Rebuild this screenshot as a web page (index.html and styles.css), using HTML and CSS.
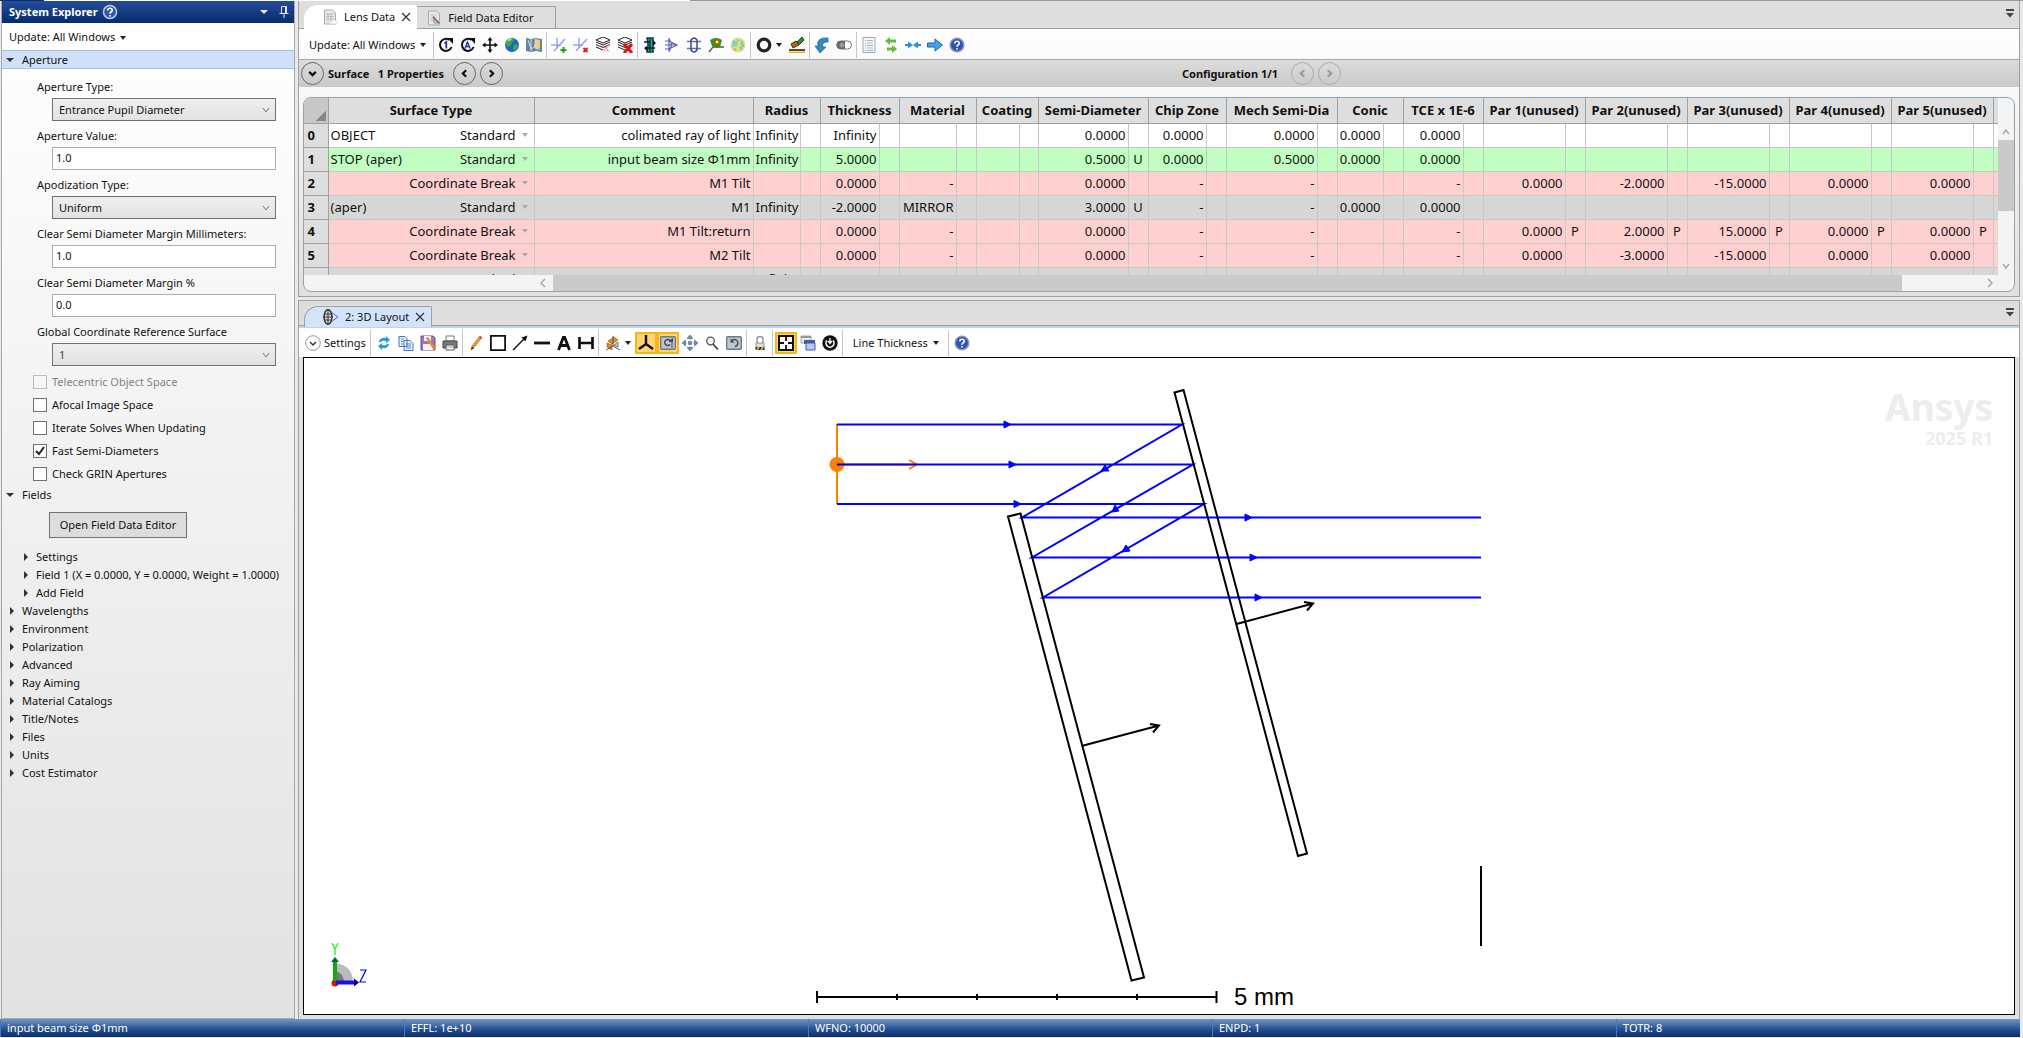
FILE: index.html
```html
<!DOCTYPE html>
<html lang="en">
<head>
  <meta charset="UTF-8" />
  <title>Lens Data</title>
  <link rel="stylesheet" href="styles.css">
</head>
<body>
  <div class="ribbon-edge"></div>
  <div class="workspace">
    <aside class="explorer">
      <header class="explorer-title">
        <h1>System Explorer</h1>
        <svg class="icon" viewBox="0 0 16 16"><circle cx="8" cy="8" r="6.5" fill="#3157b5" stroke="#c3cbdc" stroke-width="1.5"/><path d="M5.8 6.4q0-2.200 2.200-2.200t2.200 2q0 1.100-1.200 1.800-1 .6-1 1.700M8 11v1.500" fill="none" stroke="#fff" stroke-width="1.600"/></svg>
        <span class="spacer"></span>
        <svg class="icon" viewBox="0 0 16 16"><path d="M4 6h8l-4 4z" fill="#dfe5f2"/></svg>
        <svg class="icon" viewBox="0 0 16 16"><path d="M5.500 9.500v-7h5v7M9.500 3v6M3.500 9.500h9M8 10v4" fill="none" stroke="#dfe5f2"/></svg>
      </header>
      <button class="update-all">Update: All Windows <i class="caret"></i></button>
      <details class="group active" open>
        <summary>Aperture</summary>
        <div class="form">
          <label for="ap-type">Aperture Type:</label>
          <select id="ap-type"><option>Entrance Pupil Diameter</option></select>
          <label for="ap-value">Aperture Value:</label>
          <input type="text" id="ap-value" value="1.0">
          <label for="apod">Apodization Type:</label>
          <select id="apod"><option>Uniform</option></select>
          <label for="margin-mm">Clear Semi Diameter Margin Millimeters:</label>
          <input type="text" id="margin-mm" value="1.0">
          <label for="margin-pc">Clear Semi Diameter Margin %</label>
          <input type="text" id="margin-pc" value="0.0">
          <label for="ref-surface">Global Coordinate Reference Surface</label>
          <select id="ref-surface" class="dim"><option>1</option></select>
        </div>
        <div class="checks">
          <label class="off"><input type="checkbox" disabled> Telecentric Object Space</label>
          <label><input type="checkbox"> Afocal Image Space</label>
          <label><input type="checkbox"> Iterate Solves When Updating</label>
          <label><input type="checkbox" checked> Fast Semi-Diameters</label>
          <label><input type="checkbox"> Check GRIN Apertures</label>
        </div>
      </details>
      <details class="group" open>
        <summary>Fields</summary>
        <button class="open-editor">Open Field Data Editor</button>
        <details class="nested"><summary>Settings</summary></details>
        <details class="nested"><summary>Field 1 (X = 0.0000, Y = 0.0000, Weight = 1.0000)</summary></details>
        <details class="nested"><summary>Add Field</summary></details>
      </details>
      <details class="group"><summary>Wavelengths</summary></details>
      <details class="group"><summary>Environment</summary></details>
      <details class="group"><summary>Polarization</summary></details>
      <details class="group"><summary>Advanced</summary></details>
      <details class="group"><summary>Ray Aiming</summary></details>
      <details class="group"><summary>Material Catalogs</summary></details>
      <details class="group"><summary>Title/Notes</summary></details>
      <details class="group"><summary>Files</summary></details>
      <details class="group"><summary>Units</summary></details>
      <details class="group"><summary>Cost Estimator</summary></details>
    </aside>

    <main class="panels">
      <section class="panel editor">
        <div class="tabs">
          <button class="tab current">
            <svg class="icon" viewBox="0 0 16 16"><path d="M2.500 1h8l3 3v11h-11z" fill="#e9eaea" stroke="#aaa"/><path d="M4 5h8M4 7.500h8M4 10h8M6 4v9M9 4v9" stroke="#bbb" fill="none"/><path d="M8 15q-1-3 2-3 1-2 3-1 3 1 2 4z" fill="#f5f7f9" stroke="#ccc" stroke-width=".5"/></svg>
            Lens Data
            <svg class="close" viewBox="0 0 10 10"><path d="M1 1l8 8M9 1l-8 8"/></svg>
          </button>
          <button class="tab">
            <svg class="icon" viewBox="0 0 16 16"><path d="M2.500 1h8l3 3v11h-11z" fill="#e9eaea" stroke="#aaa"/><path d="M4 5h7M4 7.500h7M4 10h7M6 4v8" stroke="#ccc" fill="none"/><path d="M7 7l6 6" stroke="#d22" stroke-width="1.500"/><path d="M8 6v7h6" stroke="#4a9" fill="none"/></svg>
            Field Data Editor
          </button>
          <span class="spacer"></span>
          <button class="tab-menu" aria-label="Tab list"><svg viewBox="0 0 10 10"><path d="M1 0h8v2H1zM1 4h8L5 8.500z" fill="#444"/></svg></button>
        </div>
        <div class="toolbar">
          <button class="text">Update: All Windows <i class="caret"></i></button>
          <i class="sep"></i>
          <button><svg viewBox="0 0 16 16"><path d="M11.500 3A6 6 0 1 0 13.600 10" fill="none" stroke="#111" stroke-width="2"/><path d="M9.500 1H15v6z" fill="#111"/><path d="M6.500 6.500L8.300 5v6.500" fill="none" stroke="#2a35b0" stroke-width="1.800"/></svg></button>
          <button><svg viewBox="0 0 16 16"><path d="M11.500 3A6 6 0 1 0 13.600 10" fill="none" stroke="#111" stroke-width="2"/><path d="M9.500 1H15v6z" fill="#111"/><path d="M5 11.500L7.500 5 10 11.500M6 9.500h3" fill="none" stroke="#2a35b0" stroke-width="1.500"/></svg></button>
          <button><svg viewBox="0 0 16 16"><path d="M8 2v12M2 8h12" stroke="#111" stroke-width="1.600"/><path d="M8 0l2.500 3.500h-5zM8 16l2.500-3.500h-5zM0 8l3.500-2.500v5zM16 8l-3.500-2.500v5z" fill="#111"/></svg></button>
          <button><svg viewBox="0 0 16 16"><circle cx="8" cy="8" r="7" fill="#2165c4"/><path d="M2 4q4-4 8-3 0 3-2 4l-1 3q-2 3-4 1-2-2-1-5zM10 8q4-2 4 2l-3 4q-3-2-1-6z" fill="#3fae3d"/><path d="M3 4q2-3 5-2-1 2-5 2z" fill="#b9eaff"/></svg></button>
          <button><svg viewBox="0 0 16 16"><path d="M0 1l5 1 5-1 6 1v13l-6-1-5 1-5-1z" fill="#5f87a5"/><path d="M9 2l5 1v8l-4 2-2-4z" fill="#f0cb75"/><path d="M2 3l3 9 5-3 4 4M5 2v12M10 2v6" stroke="#d9e1e3" fill="none"/></svg></button>
          <i class="sep"></i>
          <button><svg viewBox="0 0 16 16"><path d="M0 8h10M6 1v10M3 14L14 2" stroke="#9aa5ea" stroke-width="1.500"/><path d="M12.500 10v6M9.500 13h6" stroke="#19a51c" stroke-width="2"/></svg></button>
          <button><svg viewBox="0 0 16 16"><path d="M0 8h10M6 1v10M3 14L14 2" stroke="#9aa5ea" stroke-width="1.500"/><path d="M10.500 11l4 4M14.500 11l-4 4" stroke="#d32020" stroke-width="2"/></svg></button>
          <button><svg viewBox="0 0 16 16"><path d="M8 0l7 3-7 3-7-3zM1 5l7 3 7-3M1 7.500l7 3 7-3M1 10l7 3" fill="#fff" stroke="#222"/><path d="M8 8l6 7M14 8l-6 7" stroke="#e88" stroke-width="1.500" stroke-dasharray="2 1"/></svg></button>
          <button><svg viewBox="0 0 16 16"><path d="M8 0l7 3-7 3-7-3zM1 5l7 3 7-3M1 7.500l7 3 7-3M1 10l7 3" fill="#fff" stroke="#222"/><path d="M7 7l8 9M15 7l-8 9" stroke="#e01010" stroke-width="3"/></svg></button>
          <i class="sep"></i>
          <button><svg viewBox="0 0 16 16"><path d="M5 1h6v14H5q2-7 0-14z" fill="#1cb5b0" stroke="#0b3b40" stroke-width="1.500"/><path d="M2 5h6M4 11h9M8 2v12" stroke="#102020" stroke-width="1.300"/><path d="M11 3l3 3-3 3zM5 9l-3 2 3 3z" fill="#111"/></svg></button>
          <button><svg viewBox="0 0 16 16"><path d="M5 1v14M1 4h4l8 4-8 4H1M1 8h12M5 2q5 6 0 12" stroke="#5864b8" stroke-width="1.200" fill="none"/></svg></button>
          <button><svg viewBox="0 0 16 16"><path d="M1 4.500h14M1 11.500h14" stroke="#6570c0" stroke-width="1.400"/><path d="M5 3q3-4 6 0v10q-3 4-6 0z" fill="none" stroke="#404a80" stroke-width="1.500"/></svg></button>
          <button><svg viewBox="0 0 16 16"><path d="M1 15l4-5h11" stroke="#555" fill="none" stroke-width="1.300"/><path d="M2 3q6-4 12 0l-2 7q-4 2-8-1z" fill="#32902d"/><path d="M6 4l4-1 2 3-3 3z" fill="#d93c17"/><circle cx="9" cy="5" r="1.500" fill="#ff0"/></svg></button>
          <button><svg viewBox="0 0 16 16"><circle cx="8" cy="8" r="7.500" fill="#dbe574"/><path d="M3 3l5 2-1 4-5 1zM10 2l4 4-3 2zM9 10l5-1-3 5z" fill="#75cfdf"/><path d="M6 2l3 1-1 2zM3 11l4 1-2 2zM10 8l4-1v3z" fill="#f28e96"/></svg></button>
          <i class="sep"></i>
          <button class="drop"><svg viewBox="0 0 16 16"><circle cx="8" cy="8" r="5.800" fill="none" stroke="#222" stroke-width="3.200"/></svg><i class="caret"></i></button>
          <button><svg viewBox="0 0 16 16"><path d="M4 11L2 7l5-3 3 4z" fill="#b4651b" stroke="#432"/><path d="M8 5l5-5 2 3-5 5z" fill="#328b35" stroke="#243"/><path d="M0 13h16" stroke="#111" stroke-width="1.500"/><path d="M0 15.300h16" stroke="#f0b400" stroke-width="1.500"/></svg></button>
          <i class="sep"></i>
          <button><svg viewBox="0 0 16 16"><path d="M14 1Q2 0 4 9H1l5 7 6-6H9Q7 5 14 5z" fill="#2f88c9" stroke="#1b5f9a" stroke-width=".7"/></svg></button>
          <button><svg viewBox="0 0 16 16"><rect x=".5" y="4" width="15" height="8" rx="4" fill="#fff" stroke="#777"/><path d="M5 4h4v8H5a4 4 0 0 1 0-8z" fill="#666"/><circle cx="6" cy="8" r="2.500" fill="#999"/></svg></button>
          <i class="sep"></i>
          <button><svg viewBox="0 0 16 16"><path d="M2 .5h12v15H2z" fill="#f5f8fb" stroke="#9ba9b8"/><path d="M4 3.500h1M4 6h1M4 8.500h1M4 11h1M4 13.500h1M6 3.500h6M6 6h6M6 8.500h6M6 11h6M6 13.500h6" stroke="#a3b6c9"/></svg></button>
          <button><svg viewBox="0 0 16 16"><path d="M2 4l5-4v2.500h6v3H7V8zM14 12l-5 4v-2.500H4v-3h5V8z" fill="#62bd3c"/></svg></button>
          <button><svg viewBox="0 0 16 16"><path d="M0 7h3V4.500L8 8l-5 3.500V9H0zM16 7h-3V4.500L8 8l5 3.500V9h3z" fill="#2590dd"/></svg></button>
          <button><svg viewBox="0 0 16 16"><path d="M.5 6H8V2l7.500 6L8 14v-4H.5z" fill="#42a2ea" stroke="#1b62a7"/></svg></button>
          <button><svg viewBox="0 0 16 16"><circle cx="8" cy="8" r="6.800" fill="#2b55b8" stroke="#8a97b5" stroke-width="1.500"/><path d="M5.800 6.400q0-2.200 2.200-2.200t2.200 2q0 1.100-1.200 1.800-1 .6-1 1.700M8 11v1.500" fill="none" stroke="#fff" stroke-width="1.600"/></svg></button>
        </div>
        <div class="props">
          <button class="round" aria-label="Expand"><svg viewBox="0 0 10 10"><path d="M2 3.500l3 3 3-3"/></svg></button>
          <b class="props-title">Surface &nbsp; 1 Properties</b>
          <button class="round" aria-label="Previous surface"><svg viewBox="0 0 10 10"><path d="M6.500 2l-3 3 3 3"/></svg></button>
          <button class="round" aria-label="Next surface"><svg viewBox="0 0 10 10"><path d="M3.500 2l3 3-3 3"/></svg></button>
          <b class="config">Configuration 1/1</b>
          <button class="round off" disabled aria-label="Previous configuration"><svg viewBox="0 0 10 10"><path d="M6.500 2l-3 3 3 3"/></svg></button>
          <button class="round off" disabled aria-label="Next configuration"><svg viewBox="0 0 10 10"><path d="M3.500 2l3 3-3 3"/></svg></button>
        </div>
        <div class="grid-area">
          <div class="grid-frame">
            <div class="grid-view">
              <table class="lens-grid">
                <colgroup id="cols"></colgroup>
                <thead><tr id="head"></tr></thead>
                <tbody id="rows"></tbody>
              </table>
            </div>
            <div class="vscroll">
              <svg viewBox="0 0 10 10"><path d="M2 7l3-4 3 4"/></svg>
              <i class="thumb"></i>
              <svg viewBox="0 0 10 10"><path d="M2 3l3 4 3-4"/></svg>
            </div>
            <div class="hscroll">
              <svg viewBox="0 0 10 10"><path d="M7 1L3 5l4 4"/></svg>
              <i class="thumb"></i>
              <svg viewBox="0 0 10 10"><path d="M3 1l4 4-4 4"/></svg>
            </div>
          </div>
        </div>
      </section>

      <section class="panel layout">
        <div class="tabs blue">
          <button class="tab current">
            <svg class="icon" viewBox="0 0 16 16"><ellipse cx="5" cy="8" rx="4" ry="7.300" fill="#ddd" stroke="#222" stroke-width="1.300"/><path d="M5 1v14M1 5h8M1 11h8M0 8h10" stroke="#333"/><path d="M8 3l7 5-7 5" fill="none" stroke="#5560c8"/></svg>
            2: 3D Layout
            <svg class="close" viewBox="0 0 10 10"><path d="M1 1l8 8M9 1l-8 8"/></svg>
          </button>
          <span class="spacer"></span>
          <button class="tab-menu" aria-label="Tab list"><svg viewBox="0 0 10 10"><path d="M1 0h8v2H1zM1 4h8L5 8.500z" fill="#444"/></svg></button>
        </div>
        <div class="toolbar">
          <button class="text"><svg viewBox="0 0 16 16"><circle cx="8" cy="8" r="7.300" fill="#fff" stroke="#999"/><path d="M5 7l3 3 3-3" fill="none" stroke="#333" stroke-width="1.500"/></svg> Settings</button>
          <i class="sep"></i>
          <button><svg viewBox="0 0 16 16"><path d="M3 7q1-5 7-4V1l4 4-4 3V6Q6 5 5 7zM13 9q-1 5-7 4v2l-4-4 4-3v2q4 1 5-1z" fill="#2a9bd8"/></svg></button>
          <button><svg viewBox="0 0 16 16"><path d="M1 1.500h6l2 2v8H1zM6 5.500h6l3 3v7H6z" fill="#eaf2ff" stroke="#4576b8"/><path d="M3 4h3M3 6.500h2M3 9h2M8 9h5M8 11h5M8 13h5" stroke="#5587c8"/></svg></button>
          <button><svg viewBox="0 0 16 16"><path d="M1 1h12l2 2v12H1z" fill="#9b79b8" stroke="#69488b"/><path d="M4 1h7v5H4zM3 9h10v6H3z" fill="#f5f2f8"/><path d="M6 3l7 11 2 1v-3L8 2z" fill="#e98922"/></svg></button>
          <button><svg viewBox="0 0 16 16"><path d="M4 1h8v5H4z" fill="#fff" stroke="#777"/><path d="M1 6h14v7H1z" fill="#77797c" stroke="#444"/><path d="M4 10h8v5H4z" fill="#fff" stroke="#555"/><path d="M5 12h6" stroke="#999"/></svg></button>
          <i class="sep"></i>
          <button><svg viewBox="0 0 16 16"><path d="M3 15l1-4 8-10 2 1.500-8 10z" fill="#f29a2e" stroke="#b66312" stroke-width=".7"/><path d="M3 15l1-3 2 1z" fill="#222"/><path d="M12 1l2 1.500-1 1.500-2-1.500z" fill="#d9534f"/></svg></button>
          <button><svg viewBox="0 0 16 16"><path d="M.9.9h14.200v14.200H.9z" fill="none" stroke="#111" stroke-width="1.800"/></svg></button>
          <button><svg viewBox="0 0 16 16"><path d="M1 15L12 4" stroke="#111" stroke-width="1.500"/><path d="M15.500.5l-2 6-4-4z" fill="#111"/></svg></button>
          <button><svg viewBox="0 0 16 16"><path d="M0 8h16" stroke="#111" stroke-width="2.800"/></svg></button>
          <button><svg viewBox="0 0 16 16"><path d="M2.500 15L7.300 2.500h1.400L13.500 15M4.500 10.500h7" fill="none" stroke="#111" stroke-width="2.800"/></svg></button>
          <button><svg viewBox="0 0 16 16"><path d="M1.500 2v12M14.500 2v12M1.500 8h13" stroke="#111" stroke-width="2.700"/></svg></button>
          <i class="sep"></i>
          <button class="drop"><svg viewBox="0 0 16 16"><path d="M3 6l6-4 4 3-6 4zM2 8l5 2v5l-5-3z" fill="#e8862a" stroke="#945317" stroke-width=".6"/><path d="M8 1v10L1 15M8 11l7 4" fill="none" stroke="#555"/><path d="M9 10l4-3v5z" fill="#ccc" stroke="#777"/></svg><i class="caret"></i></button>
          <button class="on"><svg viewBox="0 0 16 16"><path d="M8 0v9M8 9l-7 5M8 9l7 5" stroke="#111" stroke-width="2.400"/></svg></button>
          <button class="on"><svg viewBox="0 0 16 16"><rect x=".7" y="1.700" width="14.600" height="12.600" rx="1" fill="#bcc6cd" stroke="#6f7b84" stroke-width="1.400"/><path d="M10 9.500a3 3 0 1 1 0-4" fill="none" stroke="#445" stroke-width="1.400"/><path d="M9 6.500h3.500v-3zM12 7v6" stroke="#445" fill="#445"/></svg></button>
          <button><svg viewBox="0 0 16 16"><path d="M8 0l3 3.500H5zM8 16l3-3.500H5zM0 8l3.500-3v6zM16 8l-3.500-3v6zM6.500 6.500h3v3h-3zM8 3v2M8 11v2M3 8h2M11 8h2" fill="#6d91b5" stroke="#48688a" stroke-width=".6"/></svg></button>
          <button><svg viewBox="0 0 16 16"><circle cx="6.500" cy="6" r="3.800" fill="#f5f5f5" stroke="#555" stroke-width="1.300"/><path d="M9 9l5 5.500" stroke="#444" stroke-width="1.800"/></svg></button>
          <button><svg viewBox="0 0 16 16"><rect x=".7" y="1.700" width="14.600" height="12.600" rx="1" fill="#bcc6cd" stroke="#6f7b84" stroke-width="1.400"/><path d="M6 5.500a3.500 3.500 0 1 1 3 6" fill="none" stroke="#445" stroke-width="1.400"/><path d="M4.500 3.500v4h4z" fill="#445"/></svg></button>
          <i class="sep"></i>
          <button><svg viewBox="0 0 16 16"><path d="M5 8V4q0-2.500 3-2.500T11 4v4" fill="none" stroke="#999" stroke-width="1.500"/><path d="M4 8h8v5H4z" fill="#ddd" stroke="#999"/><path d="M3.500 12h9v3h-9z" fill="#333"/><path d="M5 15l2-3M9 15l2-3" stroke="#edc224" stroke-width="1.500"/></svg></button>
          <i class="sep"></i>
          <button class="on"><svg viewBox="0 0 16 16"><path d="M1 1h14v14H1z" fill="#fff" stroke="#111" stroke-width="2"/><path d="M8 1v5M8 15v-5M1 8h5M15 8h-5" stroke="#111" stroke-width="1.800"/></svg></button>
          <button><svg viewBox="0 0 16 16"><path d="M1 1h10v7H1z" fill="#e7e9ec" stroke="#aaa"/><path d="M1 1h10v2H1z" fill="#999"/><path d="M4 5h11v4H4z" fill="#3c5ea9"/><path d="M6 8h9v7H6z" fill="#b9c8e8" stroke="#3c5ea9"/></svg></button>
          <button><svg viewBox="0 0 16 16"><circle cx="8" cy="8" r="7.700" fill="#111"/><path d="M5 5.500a4 4 0 1 0 6 0" fill="none" stroke="#fff" stroke-width="1.600"/><path d="M8 3v5M6 6l2 2.500L10 6" fill="none" stroke="#fff" stroke-width="1.300"/></svg></button>
          <i class="sep"></i>
          <button class="text wide">Line Thickness <i class="caret"></i></button>
          <i class="sep"></i>
          <button><svg viewBox="0 0 16 16"><circle cx="8" cy="8" r="6.800" fill="#2b55b8" stroke="#8a97b5" stroke-width="1.500"/><path d="M5.800 6.400q0-2.200 2.200-2.200t2.200 2q0 1.100-1.200 1.800-1 .6-1 1.700M8 11v1.500" fill="none" stroke="#fff" stroke-width="1.600"/></svg></button>
        </div>
        <div class="canvas">
          <!-- ray trace, canvas pixels -->
          <svg class="drawing" viewBox="304 358 1710 656">
            <g class="watermark">
              <text x="1993" y="421" font-size="37" text-anchor="end">Ansys</text>
              <text x="1993" y="445" font-size="18" text-anchor="end">2025 R1</text>
            </g>
            <g class="source">
              <path d="M837 424v80M909 460l8 4.500-8 4.500M837 464.500h80"/>
              <circle cx="837" cy="464.500" r="7.500"/>
            </g>
            <g class="rays">
              <path d="M837 424.500H1182L1022 517.500H1481M837 464.500H1193L1032 557.500H1481M837 504H1204L1043 597.500H1481"/>
              <path class="tip" d="M1004 421l7 3.500-7 3.500zM1009 461l7 3.500-7 3.500zM1014 500.500l7 3.500-7 3.500zM1245 514l7 3.500-7 3.500zM1250 554l7 3.500-7 3.500zM1255 594l7 3.500-7 3.500z"/>
              <path class="tip" d="M1101 471l4-6 4 6zM1112 512l3-7 4 6zM1122 552l4-7 4 6z"/>
            </g>
            <g class="parts">
              <path d="M1174.500 392.500l9-2.500 123.500 463.500-9 2.500zM1008 516.500l12.500-3L1144 977.500l-12.500 3z"/>
              <path d="M1236.500 624l76.500-20.500M1304 602l9 1.500-6 7M1081.500 746l77.500-20.500M1150 724l9 1.500-6 7M1481 866v80"/>
              <path d="M817 997h399.500M817 991v12M1216.500 991v12M897 994v6M977 994v6M1057 994v6M1137 994v6"/>
              <text x="1234" y="1005" font-size="24">5 mm</text>
            </g>
            <g class="axes">
              <path d="M335 983v-20q18 2 18 20z" fill="#bbb"/>
              <path d="M335 983v-12q9 2 9 12z" fill="#777"/>
              <circle cx="335" cy="983" r="3.500" fill="#d11"/>
              <path d="M335 981v-20" stroke="#1a1" stroke-width="4"/><path d="M331 962l4-5 4 5z" fill="#064"/>
              <path d="M336 982.500h18" stroke="#11e" stroke-width="4"/><path d="M354 978.500l5 4-5 4z" fill="#006"/>
              <path d="M332 943l3 6 3-6M335 949v6" fill="none" stroke="#0f0" stroke-width="1.200"/>
              <path d="M360 970h6l-6 12h6" fill="none" stroke="#00f" stroke-width="1.200"/>
            </g>
          </svg>
        </div>
      </section>
    </main>
  </div>
  <footer class="status">
    <span>input beam size Φ1mm</span>
    <span>EFFL: 1e+10</span>
    <span>WFNO: 10000</span>
    <span>ENPD: 1</span>
    <span>TOTR: 8</span>
  </footer>

  <script>
    // name, value width, solve width
    const columns = [
      ["Radius", 47, 20], ["Thickness", 59, 20], ["Material", 57, 20], ["Coating", 43, 19],
      ["Semi-Diameter", 90, 20], ["Chip Zone", 58, 20], ["Mech Semi-Dia", 91, 20], ["Conic", 46, 20],
      ["TCE x 1E-6", 60, 20], ["Par 1(unused)", 82, 20], ["Par 2(unused)", 82, 20],
      ["Par 3(unused)", 82, 20], ["Par 4(unused)", 82, 20], ["Par 5(unused)", 82, 20], ["", 82, 20]
    ];
    // kind, label, type, comment, then one value per column ("value|solve")
    const surfaces = [
      ["plain", "OBJECT", "Standard", "colimated ray of light", "Infinity", "Infinity", "", "", "0.0000", "0.0000", "0.0000", "0.0000", "0.0000"],
      ["stop", "STOP (aper)", "Standard", "input beam size Φ1mm", "Infinity", "5.0000", "", "", "0.5000|U", "0.0000", "0.5000", "0.0000", "0.0000"],
      ["break", "", "Coordinate Break", "M1 Tilt", "", "0.0000", "-", "", "0.0000", "-", "-", "", "-", "0.0000", "-2.0000", "-15.0000", "0.0000", "0.0000"],
      ["mirror", "(aper)", "Standard", "M1", "Infinity", "-2.0000", "MIRROR", "", "3.0000|U", "-", "-", "0.0000", "0.0000"],
      ["break", "", "Coordinate Break", "M1 Tilt:return", "", "0.0000", "-", "", "0.0000", "-", "-", "", "-", "0.0000|P", "2.0000|P", "15.0000|P", "0.0000|P", "0.0000|P"],
      ["break", "", "Coordinate Break", "M2 Tilt", "", "0.0000", "-", "", "0.0000", "-", "-", "", "-", "0.0000", "-3.0000", "-15.0000", "0.0000", "0.0000"],
      ["mirror", "(aper)", "Standard", "M2", "Infinity", "0.0000", "MIRROR", "", "3.0489", "-", "-", "0.0000", "0.0000"]
    ];

    let cols = '<col style="width:24px"><col style="width:206px"><col style="width:219px">';
    let head = '<th class="corner"></th><th>Surface Type</th><th>Comment</th>';
    for (const [name, w, s] of columns) {
      cols += `<col style="width:${w}px"><col style="width:${s}px">`;
      head += `<th colspan="2">${name}</th>`;
    }
    document.getElementById("cols").innerHTML = cols;
    document.getElementById("head").innerHTML = head;

    document.getElementById("rows").innerHTML = surfaces.map((row, i) => {
      const [kind, label, type, comment, ...values] = row;
      let cells = `<th>${i}</th><td><div class="type"><span>${label}</span><span>${type}</span><i class="caret"></i></div></td><td>${comment}</td>`;
      columns.forEach((c, k) => {
        const [value, solve] = (values[k] || "").split("|");
        cells += `<td>${value}</td><td class="solve">${solve || ""}</td>`;
      });
      return `<tr class="${kind}">${cells}</tr>`;
    }).join("");
  </script>
</body>
</html>
```
FILE: styles.css
```css
* {
  box-sizing: border-box;
}

body {
  margin: 0;
  height: 100vh;
  display: flex;
  flex-direction: column;
  overflow: hidden;
  background: #e9e9e9;
  color: #111;
  font: 11px/18px "Noto Sans", sans-serif;
}

button, input, select {
  font: inherit;
  color: inherit;
}

button {
  border: none;
  background: none;
  padding: 0;
}

.spacer {
  flex: 1;
}

.icon {
  width: 16px;
  height: 16px;
}

.caret {
  display: inline-block;
  border: 3px solid transparent;
  border-top: 4px solid #222;
  border-bottom: 0;
  margin-left: 2px;
  vertical-align: middle;
}

.ribbon-edge {
  height: 1px;
  background: linear-gradient(to right, #0a2f6b 44px, #fff 44px 690px, #9a9a9a 690px);
}

.workspace {
  flex: 1;
  min-height: 0;
  display: flex;
  gap: 3px;
  padding: 0 3px 0 1px;
}

/* System Explorer */
.explorer {
  flex: 0 0 294px;
  border: 1px solid #a8a8a8;
  border-top: none;
  background: linear-gradient(#fff, #e2e2e2);
  white-space: nowrap;
  overflow: hidden;
}

.explorer-title {
  display: flex;
  align-items: center;
  gap: 4px;
  height: 22px;
  padding: 0 2px 0 7px;
  background: linear-gradient(#264c98, #052c6e);
  color: #fff;
}

.explorer-title h1 {
  margin: 0;
  font-size: 11px;
}

.update-all {
  display: block;
  width: 100%;
  height: 27px;
  padding: 0 7px;
  text-align: left;
  background: #fff;
}

summary {
  height: 18px;
  padding-left: 20px;
  list-style: none;
  display: flex;
  align-items: center;
}

summary::before {
  content: "";
  margin: 0 8px 0 -12px;
  border: 4px solid transparent;
  border-left-color: #333;
  border-right: 0;
}

details[open] > summary::before {
  margin: 0 8px 0 -16px;
  border: 4px solid transparent;
  border-top-color: #333;
  border-bottom: 0;
}

.nested summary {
  padding-left: 34px;
}

.active > summary {
  height: 19px;
  background: #cfe1f8;
  border: 1px solid #a5bfdc;
  border-width: 1px 0;
}

.form {
  padding: 6px 18px 0 35px;
}

.form label {
  display: block;
  height: 23px;
  line-height: 23px;
}

.form input, .form select {
  display: block;
  width: calc(100% - 15px);
  height: 23px;
  margin: 0 0 3px 15px;
  border: 1px solid #abadb3;
  border-radius: 0;
  background: #fff;
  padding: 0 3px 3px;
}

.form select {
  appearance: none;
  padding: 0 6px;
  border-color: #707070;
  background: url("data:image/svg+xml,%3Csvg xmlns='http://www.w3.org/2000/svg' viewBox='0 0 8 8'%3E%3Cpath d='M1 2l3 4 3-4' fill='none' stroke='%23777'/%3E%3C/svg%3E") right 5px center / 8px 8px no-repeat, linear-gradient(#efefef, #e2e2e2);
}

.form select.dim {
  color: #444;
}

.checks {
  padding: 1px 0 1px 31px;
}

.checks label {
  display: flex;
  align-items: center;
  gap: 5px;
  height: 23px;
}

.checks input {
  appearance: none;
  width: 14px;
  height: 14px;
  margin: 0;
  border: 1px solid #707070;
  background: #fff;
}

.checks input:checked {
  background: #fff url("data:image/svg+xml,%3Csvg xmlns='http://www.w3.org/2000/svg' viewBox='0 0 12 12'%3E%3Cpath d='M2 6l3 3 5-7' fill='none' stroke='%23222' stroke-width='2'/%3E%3C/svg%3E");
}

.checks .off {
  color: #838383;
}

.checks .off input {
  border-color: #bcbcbc;
  background: #f6f6f6;
}

.open-editor {
  display: block;
  width: 138px;
  height: 26px;
  margin: 8px 0 10px 47px;
  border: 1px solid #707070;
  background: #ddd;
}

/* Panels */
.panels {
  flex: 1;
  min-width: 0;
  display: flex;
  flex-direction: column;
  gap: 3px;
}

.panel {
  border: 1px solid #a0a0a0;
  border-top: none;
  background: #e0e0e0;
}

.layout {
  flex: 1;
  min-height: 0;
  display: flex;
  flex-direction: column;
  border-top: 1px solid #a0a0a0;
  border-bottom: none;
  padding-bottom: 4px;
}

.tabs {
  display: flex;
  align-items: flex-end;
  height: 28px;
  padding-left: 5px;
  border-bottom: 1px solid #a0a0a0;
  background: #dedede;
}

.tab {
  display: flex;
  align-items: center;
  gap: 6px;
  height: 22px;
  padding: 0 21px 0 9px;
  border: 1px solid #a0a0a0;
  border-width: 1px 1px 0 0;
}

.tab.current {
  height: 24px;
  margin-bottom: -1px;
  padding: 0 6px 0 18px;
  border: none;
  background: #fff;
  border-radius: 14px 2px 0 0;
}

.tabs.blue {
  height: 27px;
  border-bottom: 2px solid #b9d4f5;
  box-shadow: inset 0 -1px #a0a0a0;
}

.blue .tab.current {
  height: 21px;
  background: #d3e4fa;
  border: 1px solid #a0a0a0;
  border-bottom: none;
}

.close {
  width: 10px;
  height: 10px;
  fill: none;
  stroke: #333;
  stroke-width: 1.2;
}

.tab-menu {
  height: 100%;
  padding: 0 4px;
}

.tab-menu svg {
  width: 10px;
  height: 10px;
}

.toolbar {
  display: flex;
  align-items: center;
  height: 31px;
  padding: 2px 0 0 4px;
  border-bottom: 1px solid #a8a8a8;
  background: linear-gradient(#fff, #fafafa);
}

.toolbar button {
  display: flex;
  align-items: center;
  justify-content: center;
  width: 22px;
  height: 22px;
  white-space: nowrap;
}

.toolbar button.text {
  width: auto;
  padding: 0 6px;
  gap: 3px;
}

.toolbar button.wide {
  padding: 0 8px;
}

.toolbar button.drop {
  width: 34px;
  gap: 2px;
}

.toolbar button.on {
  border: 2px solid #f5b51b;
  background: #ffd475;
}

.toolbar svg {
  width: 16px;
  height: 16px;
  flex: none;
}

.sep {
  width: 1px;
  height: 26px;
  margin: 0 1px;
  background: #c4c4c4;
}

.layout .toolbar {
  height: 29px;
  padding: 0 0 0 3px;
  border-bottom: none;
  background: #fff;
}

.layout .sep {
  margin: 0 2px 0 1px;
}

.layout .text:first-child {
  padding: 0 3px;
}

.props {
  display: flex;
  align-items: center;
  gap: 4px;
  height: 27px;
  padding-left: 2px;
  background: linear-gradient(#dcdcdc, #c9c9c9);
}

.props-title {
  margin-right: 5px;
}

.config {
  margin: 0 9px 0 675px;
}

.round {
  display: grid;
  place-items: center;
  width: 23px;
  height: 23px;
  border: 1px solid #666;
  border-radius: 50%;
}

.round svg {
  width: 11px;
  height: 11px;
  fill: none;
  stroke: #111;
  stroke-width: 2;
}

.round.off {
  border-color: #aaa;
}

.round.off svg {
  stroke: #999;
}

.grid-area {
  padding: 10px 4px 4px;
  background: linear-gradient(#f8f8f8, #e0e0e0);
}

/* Lens data grid */
.grid-frame {
  display: grid;
  grid-template: 177px 16px / 1fr 16px;
  border: 1px solid #8fa5b5;
  border-radius: 8px;
  overflow: hidden;
  background: #f4f4f4;
}

.grid-view {
  overflow: hidden;
}

.lens-grid {
  table-layout: fixed;
  width: 100px;
  border-collapse: collapse;
  font-size: 13px;
  white-space: nowrap;
}

.lens-grid th, .lens-grid td {
  height: 24px;
  padding: 0 2px;
  border: 1px solid #c8c8c8;
  border-width: 0 1px 1px 0;
  text-align: right;
}

.lens-grid th {
  padding: 0;
  background: #dedede;
  border-color: #a0a0a0;
  text-align: center;
}

.lens-grid thead th {
  height: 25px;
}

.lens-grid .corner {
  background: linear-gradient(135deg, transparent 50%, #888 50%) right 2px bottom 2px / 10px 10px no-repeat, #c8c8c8;
}

.lens-grid tbody th {
  padding-right: 9px;
}

.lens-grid .solve {
  text-align: center;
}

.type {
  display: flex;
  align-items: center;
  justify-content: space-between;
}

.type span + span {
  margin-left: auto;
}

.type .caret {
  border-top-color: #aaa;
  margin: 0 4px 0 6px;
}

.plain {
  background: #fff;
}

.stop {
  background: #c0ffc0;
}

.break {
  background: #ffd0d0;
}

.mirror {
  background: #d7d7d7;
}

.vscroll, .hscroll {
  display: flex;
  align-items: center;
}

.vscroll {
  flex-direction: column;
  padding: 29px 0 4px;
}

.vscroll .thumb {
  width: 16px;
  height: 71px;
  margin: 3px 0 auto;
  background: #cacaca;
}

.hscroll .thumb {
  flex: 1;
  height: 16px;
  margin: 0 83px 0 5px;
  background: #cacaca;
}

.hscroll {
  padding: 0 3px 0 234px;
}

.vscroll svg, .hscroll svg {
  width: 10px;
  height: 10px;
  fill: none;
  stroke: #aaa;
  stroke-width: 1.5;
}

/* 3D layout */
.canvas {
  flex: 1;
  min-height: 0;
  margin: 0 4px;
  border: 1px solid #000;
  background: #fff;
}

.drawing {
  display: block;
  width: 100%;
  height: 100%;
  stroke-width: 2;
}

.watermark {
  fill: #ededed;
  font-weight: bold;
}

.source path {
  fill: none;
  stroke: #ff8000;
}

.source circle {
  fill: #ff8000;
}

.rays path {
  fill: none;
  stroke: #00f;
}

.rays .tip {
  fill: #00f;
  stroke-width: 1;
}

.parts path {
  fill: none;
  stroke: #000;
}

.parts text {
  font-family: "Liberation Sans", sans-serif;
}

/* Status bar */
.status {
  display: grid;
  grid-template-columns: repeat(5, 1fr);
  height: 18px;
  margin: 0 3px 1px 0;
  background: linear-gradient(#7096c8, #234c8c 60%, #0a2f6b);
  color: #fff;
}

.status span {
  padding-left: 6px;
  border-left: 1px solid #5273bd;
}
```
